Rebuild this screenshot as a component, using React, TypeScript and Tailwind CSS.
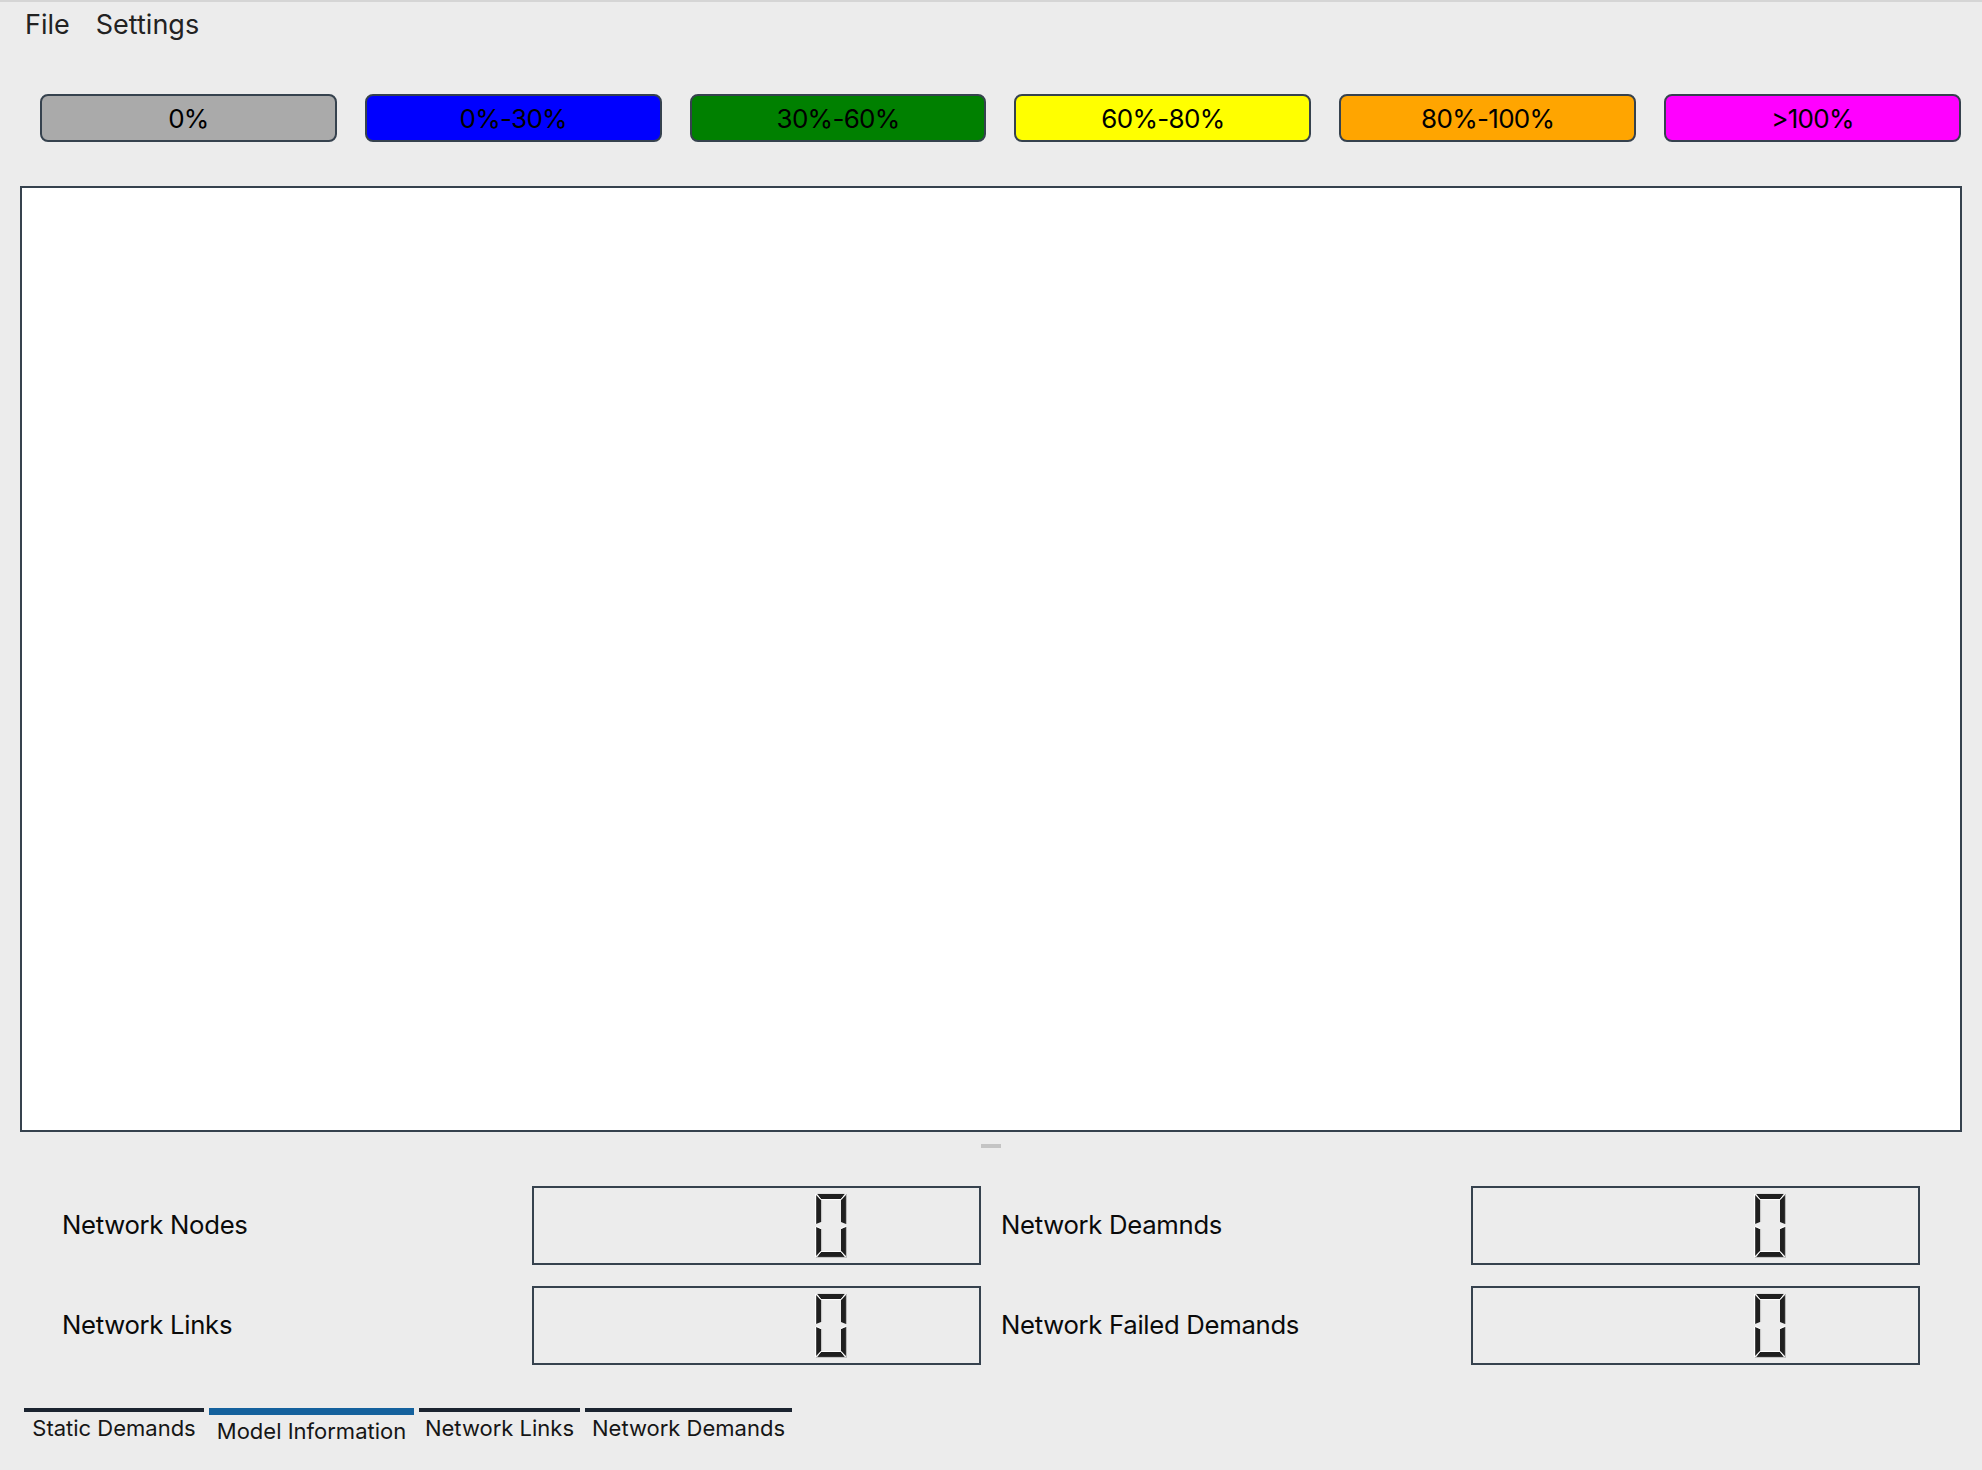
import React from "react";

const Digit = () => (
  <svg width="32" height="65" viewBox="0 0 32 65" className="block">
    <polygon points="2,1 30,1 26,6 6,6" fill="#1f1f1f" />
    <polygon points="1,2 6,7 6,29 1,31" fill="#1f1f1f" />
    <polygon points="31,2 31,31 26,29 26,7" fill="#1f1f1f" />
    <polygon points="1,34 6,36 6,58 1,63" fill="#1f1f1f" />
    <polygon points="31,34 31,63 26,58 26,36" fill="#1f1f1f" />
    <polygon points="6,59 26,59 30,64 2,64" fill="#1f1f1f" />
    <polyline points="6,6.6 26,6.6" stroke="#ffffff" strokeWidth="1" fill="none" />
    <polyline points="1.5,1 6,6.5" stroke="#ffffff" strokeWidth="1" fill="none" />
    <polyline points="30.5,1 26,6.5" stroke="#ffffff" strokeWidth="1" fill="none" />
    <polyline points="0.6,1 0.6,31" stroke="#ffffff" strokeWidth="1.2" fill="none" />
    <polyline points="0.6,34 0.6,64" stroke="#ffffff" strokeWidth="1.2" fill="none" />
    <polyline points="1,33 6,35.5" stroke="#ffffff" strokeWidth="1" fill="none" />
    <polyline points="31,33 26,35.5" stroke="#ffffff" strokeWidth="1" fill="none" />
    <polyline points="6,58.5 26,58.5" stroke="#ffffff" strokeWidth="1" fill="none" />
    <polyline points="1.5,64 6,58.5" stroke="#ffffff" strokeWidth="1" fill="none" />
    <polyline points="30.5,64 26,58.5" stroke="#ffffff" strokeWidth="1" fill="none" />
    <polyline points="6.6,7 6.6,29" stroke="#c4c4c4" strokeWidth="1" fill="none" />
    <polyline points="6.6,36 6.6,58" stroke="#c4c4c4" strokeWidth="1" fill="none" />
    <polyline points="31.5,1 31.5,31" stroke="#b8b8b8" strokeWidth="1.2" fill="none" />
    <polyline points="31.5,34 31.5,64.5" stroke="#b8b8b8" strokeWidth="1.2" fill="none" />
    <polyline points="1,64.5 32,64.5" stroke="#c4c4c4" strokeWidth="1.2" fill="none" />
    <polyline points="2,0.5 30,0.5" stroke="#e0e0e0" strokeWidth="1" fill="none" />
  </svg>
);

const LcdBox = () => (
  <div className="h-[79px] border-2 border-[#36424e] flex items-center justify-end pr-[132px]">
    <Digit />
  </div>
);

const buttons: { label: string; cls: string }[] = [
  { label: "0%", cls: "bg-[#aaaaaa]" },
  { label: "0%-30%", cls: "bg-[#0000ff]" },
  { label: "30%-60%", cls: "bg-[#008000]" },
  { label: "60%-80%", cls: "bg-[#ffff00]" },
  { label: "80%-100%", cls: "bg-[#ffa500]" },
  { label: ">100%", cls: "bg-[#ff00ff]" },
];

const tabs: { label: string; w: string; active?: boolean }[] = [
  { label: "Static Demands", w: "w-[180px]" },
  { label: "Model Information", w: "w-[205px]", active: true },
  { label: "Network Links", w: "w-[161px]" },
  { label: "Network Demands", w: "w-[207px]" },
];

export default function App() {
  return (
    <div
      className="w-[1982px] h-[1470px] bg-[#ececec] flex flex-col overflow-hidden"
      style={{ fontFamily: "Inter, 'Liberation Sans', sans-serif" }}
    >
      <div className="h-[2px] bg-[#d5d5d5]" />
      <div className="h-[44px] flex items-center pl-[25px] gap-[26px] text-[27px] text-[#222222] leading-none">
        <span>File</span>
        <span>Settings</span>
      </div>

      <div className="mt-[48px] flex pl-[40px] pr-[21px] gap-[28px]">
        {buttons.map((b) => (
          <div
            key={b.label}
            className={`flex-1 h-[48px] rounded-[8px] border-2 border-[#36424e] flex items-center justify-center pt-[2px] text-[26px] tracking-[-0.7px] text-black leading-none ${b.cls}`}
          >
            {b.label}
          </div>
        ))}
      </div>

      <div className="mt-[44px] mx-[20px] h-[946px] bg-white border-2 border-[#36424e]" />

      <div className="h-[54px] flex justify-center">
        <div className="mt-[12px] w-[20px] h-[4px] bg-[#c4c4c4]" />
      </div>

      <div className="grid grid-cols-4 gap-x-[20px] gap-y-[21px] px-[62px] text-[25.7px] tracking-[-0.3px] text-[#0a0a0a]">
        <div className="h-[79px] flex items-center">Network Nodes</div>
        <LcdBox />
        <div className="h-[79px] flex items-center">Network Deamnds</div>
        <LcdBox />
        <div className="h-[79px] flex items-center">Network Links</div>
        <LcdBox />
        <div className="h-[79px] flex items-center">Network Failed Demands</div>
        <LcdBox />
      </div>

      <div className="mt-[43px] flex pl-[24px] gap-[5px]">
        {tabs.map((t) => (
          <div key={t.label} className={`${t.w} flex flex-col`}>
            <div className={t.active ? "h-[7px] bg-[#14619d]" : "h-[4px] bg-[#1b2430]"} />
            <div className="pt-[3px] h-[29px] leading-[26px] text-center text-[22px] text-[#161616] whitespace-nowrap">
              {t.label}
            </div>
          </div>
        ))}
      </div>
    </div>
  );
}
